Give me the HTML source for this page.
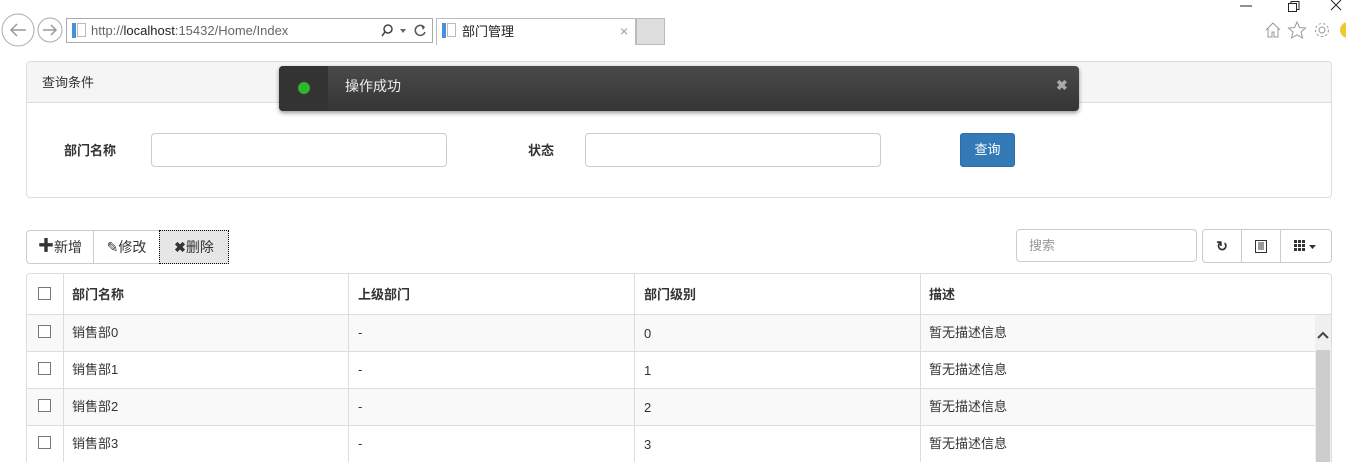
<!DOCTYPE html>
<html><head><meta charset="utf-8"><style>
*{box-sizing:border-box;margin:0;padding:0}
html,body{width:1346px;height:462px;overflow:hidden}
body{background:#fff;font-family:"Liberation Sans","Noto Sans CJK SC",sans-serif;font-size:13px;color:#333;position:relative;line-height:1.2}
.a{position:absolute}
.inp{position:absolute;border:1px solid #ccc;border-radius:4px;background:#fff}
.btn{position:absolute;border:1px solid #ccc;background:#fff;height:34px;display:flex;align-items:center;justify-content:center;font-size:14px}
.cb{position:absolute;width:13px;height:13px;border:1px solid #777;background:#fff}
.vl{position:absolute;width:1px;background:#ddd}
.hl{position:absolute;height:1px;background:#ddd}
</style></head><body>
<svg class="a" style="left:0;top:12px" width="70" height="36"><circle cx="18" cy="18" r="16" fill="none" stroke="#aaa"/><path d="M26 18H11M17 12l-6 6 6 6" fill="none" stroke="#999" stroke-width="1.5"/><circle cx="50" cy="18" r="12" fill="none" stroke="#aaa"/><path d="M43 18h13M51 13l5 5-5 5" fill="none" stroke="#999" stroke-width="1.5"/></svg>
<div class="a" style="left:66px;top:18px;width:367px;height:25px;border:1px solid #aaa"></div>
<div class="a" style="left:72px;top:23px;width:4px;height:15px;background:#4a90d9"></div><div class="a" style="left:77px;top:23px;width:9px;height:14px;border:1px solid #bbb"></div>
<div class="a" style="left:91px;top:23px;font-size:13px;color:#666">http://<span style="color:#222">localhost</span>:15432/Home/Index</div>
<svg class="a" style="left:380px;top:23px" width="50" height="16"><circle cx="8" cy="6" r="4" fill="none" stroke="#444" stroke-width="1.5"/><path d="M5 9l-3 4" stroke="#444" stroke-width="1.5"/><path d="M20 6h6l-3 4z" fill="#666"/><path d="M44 4a5 5 0 1 0 1 5" fill="none" stroke="#555" stroke-width="1.5"/><path d="M41 2l4 2-2 3z" fill="#555"/></svg>
<div class="a" style="left:436px;top:18px;width:200px;height:27px;border:1px solid #bbb;border-bottom:none"></div>
<div class="a" style="left:442px;top:23px;width:4px;height:15px;background:#4a90d9"></div><div class="a" style="left:447px;top:23px;width:9px;height:14px;border:1px solid #bbb"></div>
<div class="a" style="left:462px;top:24px;font-size:13px;color:#222">部门管理</div>
<div class="a" style="left:620px;top:23px;color:#999;font-size:14px">×</div>
<div class="a" style="left:636px;top:18px;width:29px;height:27px;background:#ddd;border:1px solid #bbb"></div>
<svg class="a" style="left:1236px;top:0" width="110" height="14"><path d="M4 6h12" stroke="#222"/><rect x="52.5" y="3.5" width="8" height="8" fill="none" stroke="#222"/><path d="M55 3.5V1.5h8v8h-2" fill="none" stroke="#222"/><path d="M95 0l10 10M105 0l-10 10" stroke="#222"/></svg>
<svg class="a" style="left:1264px;top:21px" width="82" height="18"><path d="M2 9l7-7 7 7M4 7v9h4v-5h2v5h4V7" fill="none" stroke="#999"/><path d="M33 1l2.5 5.5 6 .5-4.5 4 1.5 6-5.5-3.2-5.5 3.2 1.5-6-4.5-4 6-.5z" fill="none" stroke="#999"/><circle cx="58" cy="9" r="3" fill="none" stroke="#999"/><circle cx="58" cy="9" r="6.5" fill="none" stroke="#999" stroke-dasharray="2.5 2"/><circle cx="84" cy="9" r="8" fill="#f0c830"/></svg>
<div class="a" style="left:26px;top:61px;width:1306px;height:137px;border:1px solid #ddd;border-radius:4px;overflow:hidden">
<div style="height:41px;background:#f5f5f5;border-bottom:1px solid #ddd;padding:13px 0 0 15px;font-size:13px">查询条件</div></div>
<div class="a" style="left:64px;top:143px;font-weight:bold">部门名称</div>
<div class="inp" style="left:151px;top:133px;width:296px;height:34px"></div>
<div class="a" style="left:528px;top:143px;font-weight:bold">状态</div>
<div class="inp" style="left:585px;top:133px;width:296px;height:34px"></div>
<div class="a" style="left:960px;top:133px;width:55px;height:34px;background:#337ab7;border:1px solid #2e6da4;border-radius:3px;color:#fff;display:flex;align-items:center;justify-content:center">查询</div>
<div class="a" style="left:279px;top:66px;width:800px;height:45px;background:linear-gradient(#4a4a4a,#353535);border-radius:4px;box-shadow:0 2px 4px rgba(0,0,0,.4)"></div>
<div class="a" style="left:279px;top:66px;width:49px;height:45px;background:#333;border-radius:4px 0 0 4px"></div>
<div class="a" style="left:298px;top:82px;width:12px;height:12px;border-radius:50%;background:#2db52d"></div>
<div class="a" style="left:345px;top:78px;color:#eee;font-size:14px">操作成功</div>
<div class="a" style="left:1056px;top:77px;color:#aaa;font-size:14px;font-weight:bold">✖</div>
<div class="btn" style="left:26px;top:230px;width:68px;border-radius:4px 0 0 4px"><b style="font-size:16px">✚</b>新增</div>
<div class="btn" style="left:93px;top:230px;width:67px">✎修改</div>
<div class="btn" style="left:159px;top:230px;width:70px;background:#e6e6e6;border:1px dotted #000"><b>✖</b>删除</div>
<div class="inp" style="left:1016px;top:229px;width:181px;height:33px;padding:8px 12px;color:#999">搜索</div>
<div class="btn" style="left:1202px;top:229px;width:40px;border-radius:4px 0 0 4px;font-weight:bold">↻</div>
<div class="btn" style="left:1241px;top:229px;width:40px"><svg width="12" height="13"><rect x=".5" y=".5" width="11" height="12" fill="none" stroke="#333"/><path d="M3 3h6M3 5h6M3 7h6M3 9h6" stroke="#333"/></svg></div>
<div class="btn" style="left:1280px;top:229px;width:52px;border-radius:0 4px 4px 0"><svg width="24" height="12"><g fill="#333"><rect x="0" y="0" width="3" height="3"/><rect x="4" y="0" width="3" height="3"/><rect x="8" y="0" width="3" height="3"/><rect x="0" y="4" width="3" height="3"/><rect x="4" y="4" width="3" height="3"/><rect x="8" y="4" width="3" height="3"/><rect x="0" y="8" width="3" height="3"/><rect x="4" y="8" width="3" height="3"/><rect x="8" y="8" width="3" height="3"/><path d="M15 5h7l-3.5 4z"/></g></svg></div>
<div class="a" style="left:26px;top:273px;width:1306px;height:200px;border:1px solid #ddd;border-radius:4px"></div>
<div class="a" style="left:27px;top:314px;width:1288px;height:37px;background:#f9f9f9"></div>
<div class="a" style="left:27px;top:388px;width:1288px;height:37px;background:#f9f9f9"></div>
<div class="hl" style="left:27px;top:314px;width:1304px"></div>
<div class="hl" style="left:27px;top:351px;width:1288px"></div>
<div class="hl" style="left:27px;top:388px;width:1288px"></div>
<div class="hl" style="left:27px;top:425px;width:1288px"></div>
<div class="vl" style="left:63px;top:274px;height:188px"></div>
<div class="vl" style="left:348px;top:274px;height:188px"></div>
<div class="vl" style="left:634px;top:274px;height:188px"></div>
<div class="vl" style="left:920px;top:274px;height:188px"></div>
<div class="a" style="left:1315px;top:315px;width:16px;height:147px;background:#f0f0f0"></div>
<div class="a" style="left:1316px;top:350px;width:14px;height:112px;background:#cdcdcd"></div>
<svg class="a" style="left:1316px;top:330px" width="14" height="10"><path d="M2 8l5-5 5 5" fill="none" stroke="#444" stroke-width="2"/></svg>
<div class="cb" style="left:38px;top:287px"></div>
<div class="a" style="left:72px;top:287px;font-weight:bold">部门名称</div>
<div class="a" style="left:358px;top:287px;font-weight:bold">上级部门</div>
<div class="a" style="left:644px;top:287px;font-weight:bold">部门级别</div>
<div class="a" style="left:929px;top:287px;font-weight:bold">描述</div>
<div class="cb" style="left:38px;top:325px"></div><div class="a" style="left:72px;top:325px">销售部0</div><div class="a" style="left:358px;top:325px">-</div><div class="a" style="left:644px;top:326px">0</div><div class="a" style="left:929px;top:325px">暂无描述信息</div>
<div class="cb" style="left:38px;top:362px"></div><div class="a" style="left:72px;top:362px">销售部1</div><div class="a" style="left:358px;top:362px">-</div><div class="a" style="left:644px;top:363px">1</div><div class="a" style="left:929px;top:362px">暂无描述信息</div>
<div class="cb" style="left:38px;top:399px"></div><div class="a" style="left:72px;top:399px">销售部2</div><div class="a" style="left:358px;top:399px">-</div><div class="a" style="left:644px;top:400px">2</div><div class="a" style="left:929px;top:399px">暂无描述信息</div>
<div class="cb" style="left:38px;top:436px"></div><div class="a" style="left:72px;top:436px">销售部3</div><div class="a" style="left:358px;top:436px">-</div><div class="a" style="left:644px;top:437px">3</div><div class="a" style="left:929px;top:436px">暂无描述信息</div>
</body></html>
